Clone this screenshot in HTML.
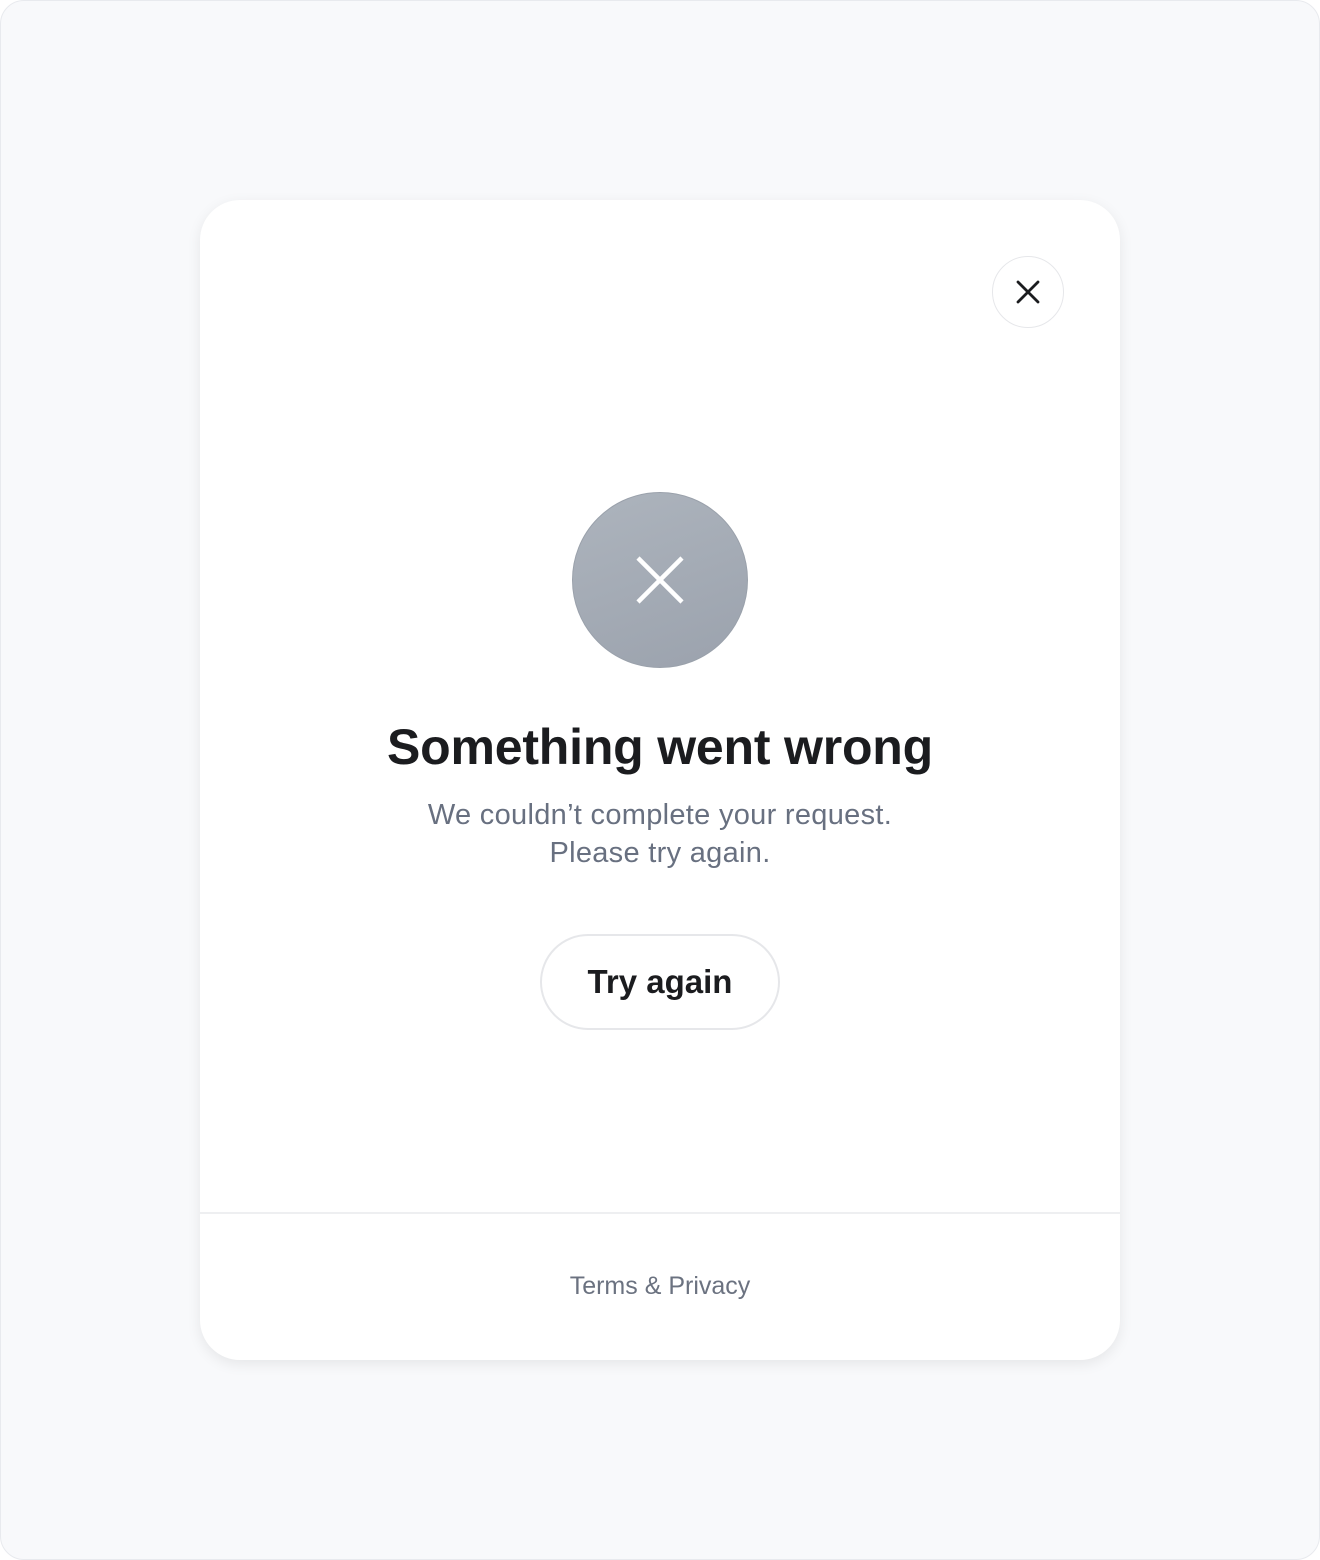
<!DOCTYPE html>
<html><head><style>
*{margin:0;padding:0;box-sizing:border-box}
body{width:1320px;height:1560px;background:#fff;font-family:"Liberation Sans",sans-serif;}
.outer{position:absolute;left:0;top:0;width:1320px;height:1560px;background:#f8f9fb;border:1px solid #e8eaee;border-radius:24px}
.card{position:absolute;left:200px;top:200px;width:920px;height:1160px;background:#fff;border-radius:40px;box-shadow:0 4px 14px rgba(0,0,0,0.08)}
.close{position:absolute;left:792px;top:56px;width:72px;height:72px;border:1.5px solid #e6e7ea;border-radius:50%}
.icon{position:absolute;left:372px;top:292px;width:176px;height:176px;border-radius:50%;background:linear-gradient(160deg,#adb4bd,#9ba2ad);border:1.5px solid #9aa1ab}
h1{position:absolute;left:0;width:920px;top:518px;text-align:center;font-size:50px;font-weight:bold;color:#1b1c1f;letter-spacing:-0.2px}
.sub{position:absolute;left:0;width:920px;top:596px;text-align:center;font-size:29px;line-height:38px;color:#687080;letter-spacing:0.3px}
.btn{position:absolute;left:340px;top:734px;width:240px;height:96px;border:2px solid #e6e7ea;border-radius:48px;text-align:center;line-height:92px;font-size:33px;font-weight:bold;color:#1b1c1f}
.div{position:absolute;left:0;top:1012px;width:920px;height:2px;background:#eeeff1}
.foot{position:absolute;left:0;width:920px;top:1072px;text-align:center;font-size:25px;color:#6b7280}
</style></head><body>
<div class="outer"></div>
<div class="card">
<div class="close"><svg width="72" height="72" style="position:absolute;left:-1.5px;top:-1.5px"><path d="M26 26L46 46M46 26L26 46" stroke="#1b1c1f" stroke-width="2.8" stroke-linecap="round"/></svg></div>
<div class="icon"><svg width="176" height="176" style="position:absolute;left:-1.5px;top:-1.5px"><path d="M66 66L110 110M110 66L66 110" stroke="#fff" stroke-width="4.5"/></svg></div>
<h1>Something went wrong</h1>
<div class="sub">We couldn’t complete your request.<br>Please try again.</div>
<div class="btn">Try again</div>
<div class="div"></div>
<div class="foot">Terms &amp; Privacy</div>
</div>
</body></html>
